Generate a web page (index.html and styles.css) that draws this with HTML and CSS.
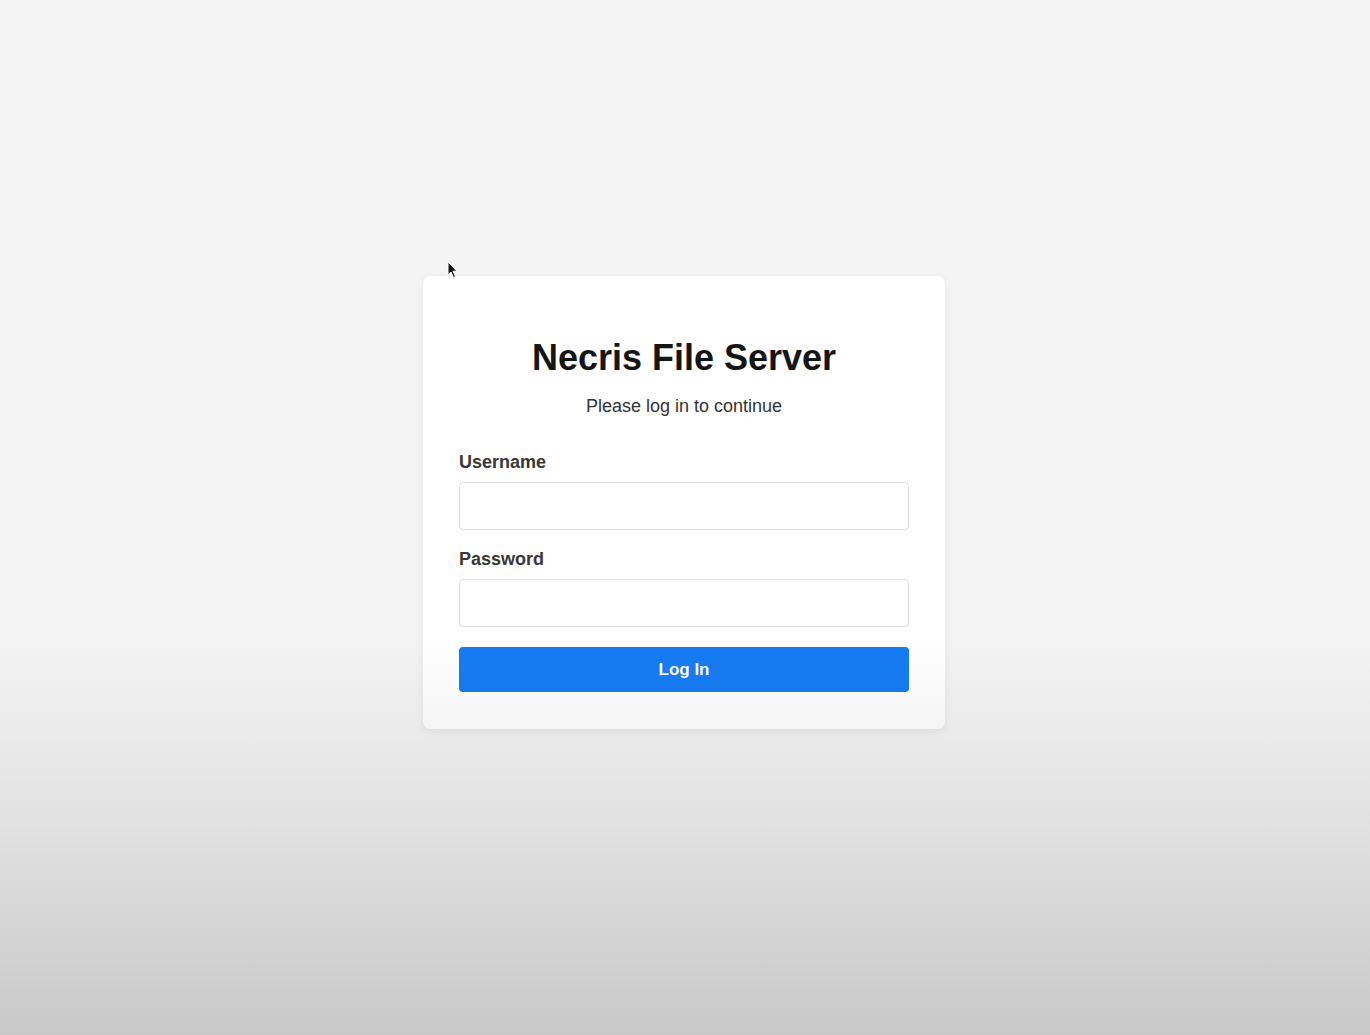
FILE: index.html
```html
<!DOCTYPE html>
<html lang="en">
<head>
<meta charset="utf-8">
<title>Necris File Server</title>
<link rel="stylesheet" href="styles.css">
</head>
<body>
<main class="page">
  <form class="card">
    <h1 class="title">Necris File Server</h1>
    <p class="subtitle">Please log in to continue</p>
    <label class="label" for="username">Username</label>
    <input class="field" id="username" type="text">
    <label class="label label-second" for="password">Password</label>
    <input class="field" id="password" type="password">
    <button class="btn" type="button">Log In</button>
  </form>
</main>
<svg class="cursor" width="12" height="18" viewBox="0 0 12 18" aria-hidden="true">
  <path d="M1 1 L1 14 L4 11 L6.5 16.5 L8.5 15.6 L6 10.2 L10 10.2 Z" fill="#111" stroke="#fff" stroke-width="1" stroke-linejoin="round"/>
</svg>
<div class="shade"></div>
</body>
</html>
```
FILE: styles.css
```css
html, body {
  margin: 0;
  padding: 0;
}
body {
  background: #f4f4f4;
  font-family: "Liberation Sans", Arial, sans-serif;
  min-height: 1035px;
  position: relative;
  overflow: hidden;
}
.page {
  display: flex;
  justify-content: center;
  padding-top: 276px;
  padding-right: 2px;
}
.card {
  box-sizing: border-box;
  width: 522px;
  background: #fff;
  border-radius: 8px;
  box-shadow: 0 2px 8px rgba(0, 0, 0, 0.07);
  padding: 36px 36px 37px;
  display: flex;
  flex-direction: column;
}
.title {
  margin: 25px 0 0;
  font-size: 36px;
  line-height: 41px;
  font-weight: 700;
  color: #151515;
  text-align: center;
}
.subtitle {
  margin: 18px 0 0;
  font-size: 18px;
  line-height: 21px;
  color: #333;
  text-align: center;
}
.label {
  margin-top: 35px;
  font-size: 18px;
  line-height: 21px;
  font-weight: 700;
  color: #383838;
}
.label-second {
  margin-top: 19px;
}
.field {
  box-sizing: border-box;
  margin-top: 9px;
  height: 48px;
  width: 100%;
  border: 1px solid #dedede;
  border-radius: 4px;
  background: #fff;
  font: inherit;
  padding: 0 12px;
  outline: none;
}
.btn {
  margin-top: 20px;
  height: 45px;
  width: 100%;
  border: none;
  border-radius: 4px;
  background: #167cf4;
  color: #fff;
  font-family: "Liberation Sans", Arial, sans-serif;
  font-size: 17px;
  font-weight: 700;
  cursor: pointer;
}
.cursor {
  position: absolute;
  left: 447px;
  top: 261px;
}
.shade {
  position: absolute;
  inset: 0;
  pointer-events: none;
  background: linear-gradient(to bottom, rgba(0,0,0,0) 0%, rgba(0,0,0,0) 61%, rgba(0,0,0,0.07) 78%, rgba(0,0,0,0.18) 100%);
}
```
